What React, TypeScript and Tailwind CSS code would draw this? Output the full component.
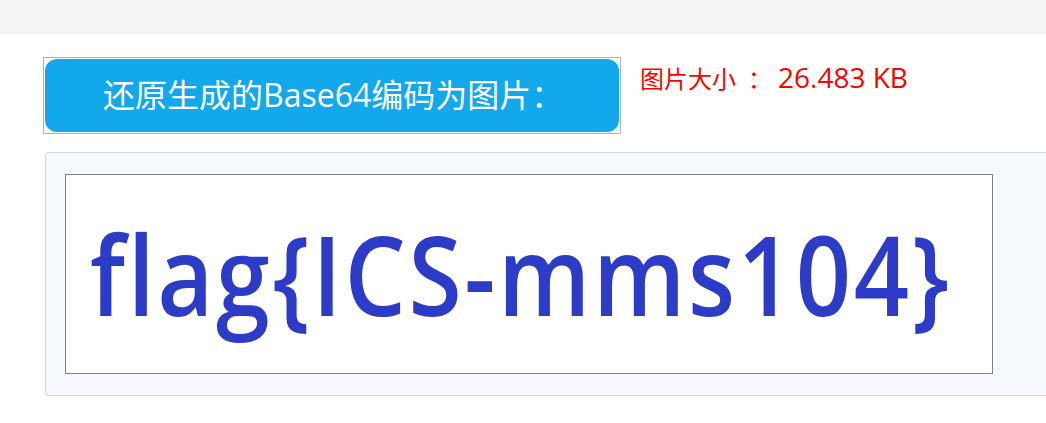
export default function App() {
  return (
    <main className="min-h-[423px] bg-white">
      {/* top bar */}
      <div className="h-[34px] bg-[#f4f4f4]" />

      <div className="pl-[43px] pt-[23px]">
        {/* header row */}
        <div className="flex items-start">
          <div className="w-[578px] h-[77px] border border-[#8fb4f5] p-px">
            <button className="w-full h-full rounded-[12px] bg-[#13a7eb] text-white text-[32px] leading-none font-['Open_Sans','Noto_Sans_CJK_SC',sans-serif] flex items-center justify-start pl-[58px] pb-[2px]">
              还原生成的Base64编码为图片：
            </button>
          </div>
          <p className="ml-[19px] mt-[4px] leading-[32px] text-[#ff0000] font-['Open_Sans','Noto_Sans_CJK_SC',sans-serif] whitespace-nowrap">
            <span className="text-[24px]">图片大小</span>
            <span className="text-[24px] ml-[12px]">：</span>
            <span className="text-[28px] ml-[6px]">26.483 KB</span>
          </p>
        </div>

        {/* preview panel */}
        <div className="mt-[18px] ml-[2px] h-[244px] rounded-l-[4px] border border-r-0 border-[#c9d9e8] bg-[#f6fafe] pl-[19px] pt-[21px]">
          <div className="w-[928px] h-[200px] border border-[#808080] bg-white flex items-center overflow-hidden">
            <span className="ml-[24px] -mt-[2px] text-[#2c3cc6] text-[110px] leading-none font-semibold font-['Open_Sans',sans-serif] tracking-[3px] origin-left scale-x-[0.88] whitespace-nowrap">
              flag{"{"}ICS-mms104{"}"}
            </span>
          </div>
        </div>
      </div>
    </main>
  );
}
